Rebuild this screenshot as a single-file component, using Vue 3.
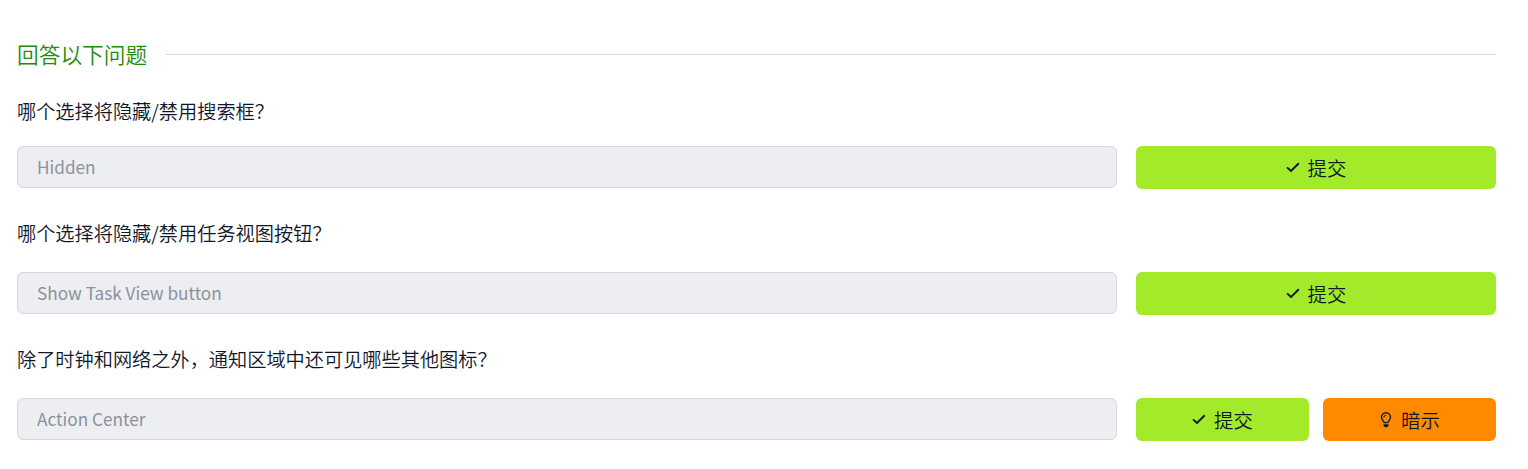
<script setup>
const questions = [
  { text: '哪个选择将隐藏/禁用搜索框？', answer: 'Hidden', hint: false },
  { text: '哪个选择将隐藏/禁用任务视图按钮？', answer: 'Show Task View button', hint: false },
  { text: '除了时钟和网络之外，通知区域中还可见哪些其他图标？', answer: 'Action Center', hint: true },
]
</script>

<template>
  <main class="panel">
    <header class="heading">
      <h2>回答以下问题</h2>
      <span class="rule"></span>
    </header>
    <section v-for="(q, i) in questions" :key="i" class="question">
      <p>{{ q.text }}</p>
      <div class="row">
        <div class="answer">{{ q.answer }}</div>
        <div class="actions">
          <button class="btn submit">
            <svg class="icon" viewBox="0 0 14 16"><path d="M1.6 7.9 5 11 12.3 3.8" /></svg>
            <span>提交</span>
          </button>
          <button v-if="q.hint" class="btn hint">
            <svg class="icon bulb" viewBox="0 0 14 16">
              <path d="M5.2 10.6C5 9.5 2.5 8.3 2.5 5.3a4.5 4.5 0 0 1 9 0C11.5 8.3 9 9.5 8.8 10.6Z" />
              <path class="glint" d="M4.8 5.2Q5 3.4 6.8 3.1" />
              <path class="base" d="M4.5 12.3H9.5V13.2Q9.2 15.2 7 15.2T4.5 13.2Z" />
            </svg>
            <span>暗示</span>
          </button>
        </div>
      </div>
    </section>
  </main>
</template>

<style>
body { background: #fff; }
</style>
<style scoped>
.panel { box-sizing: border-box; height: 469px; padding: 37px 32px 0 17px; overflow: hidden; font-family: "Noto Sans CJK SC", sans-serif; font-weight: 350; color: #10172a; }
.heading { display: flex; align-items: center; gap: 19px; height: 34px; }
h2 { margin: 0; font-size: 21.7px; line-height: 34px; font-weight: 350; color: #218c08; white-space: nowrap; }
.rule { flex: 1; height: 1px; background: #d4d6dc; }
.question { height: 126px; }
.question:nth-of-type(1) { margin-top: 23px; height: 122px; }
p { margin: 0; height: 56px; font-size: 19.2px; line-height: 34px; white-space: nowrap; }
.question:nth-of-type(1) p { height: 52px; }
.row { display: grid; grid-template-columns: 1100px 360px; gap: 19px; align-items: start; }
.answer { box-sizing: border-box; height: 42px; padding: 0 19px; border: 1px solid #d4d8e0; border-radius: 6px; background: #edeef2; color: #8b919e; font: 400 17.2px/39px "Noto Sans CJK SC", sans-serif; }
.actions { display: flex; gap: 14px; }
.btn { flex: 1; height: 43px; display: flex; align-items: center; justify-content: center; gap: 8px; border: 0; border-radius: 6px; padding: 0; color: #10172a; font: 350 19.4px/42px "Noto Sans CJK SC", sans-serif; }
.submit { background: #a3ea2a; }
.hint { background: #ff8a00; }
.icon { width: 14px; height: 16px; fill: none; stroke: currentColor; stroke-width: 1.9; stroke-linecap: round; stroke-linejoin: round; }
.bulb { stroke-width: 1.4; }
.bulb .glint { stroke-width: 1; }
.bulb .base { fill: currentColor; stroke: none; }
</style>
